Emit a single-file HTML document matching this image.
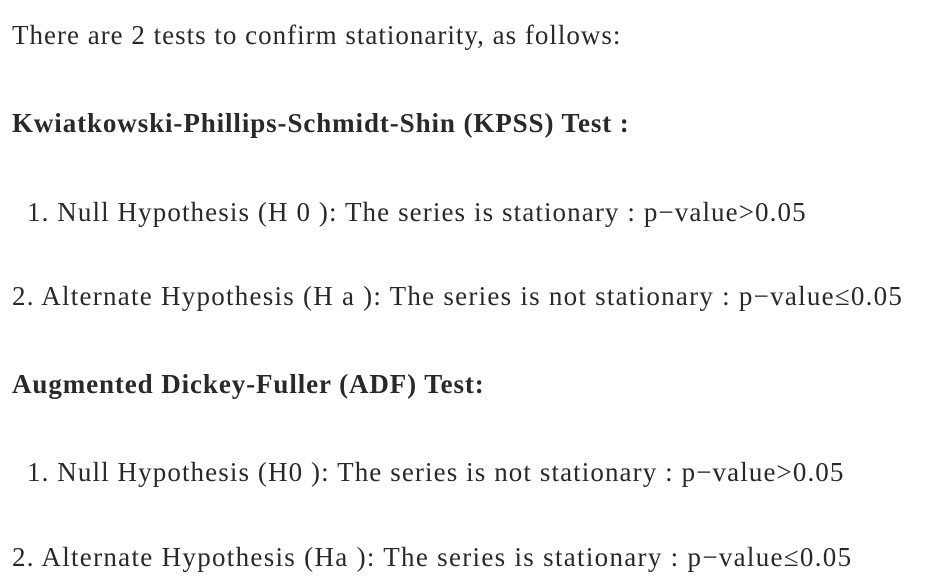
<!DOCTYPE html>
<html><head><meta charset="utf-8"><style>
body{margin:0;width:934px;height:588px;background:#fff;overflow:hidden;}
div{position:absolute;white-space:nowrap;font-family:"Liberation Serif",serif;font-size:27px;line-height:30px;color:#292929;}
b{font-weight:bold;}
</style></head><body>
<div style="left:12px;top:20px;letter-spacing:1px">There are 2 tests to confirm stationarity, as follows:</div>
<div style="left:12px;top:108px;letter-spacing:0.9px"><b>Kwiatkowski-Phillips-Schmidt-Shin (KPSS) Test :</b></div>
<div style="left:27px;top:197px;letter-spacing:1.1px">1. Null Hypothesis (H 0 ): The series is stationary : p−value&gt;0.05</div>
<div style="left:12px;top:281px;letter-spacing:1.25px">2. Alternate Hypothesis (H a ): The series is not stationary : p−value≤0.05</div>
<div style="left:12px;top:369px;letter-spacing:0.9px"><b>Augmented Dickey-Fuller (ADF) Test:</b></div>
<div style="left:27px;top:457px;letter-spacing:1.1px">1. Null Hypothesis (H0 ): The series is not stationary : p−value&gt;0.05</div>
<div style="left:12px;top:542px;letter-spacing:1.3px">2. Alternate Hypothesis (Ha ): The series is stationary : p−value≤0.05</div>
</body></html>
